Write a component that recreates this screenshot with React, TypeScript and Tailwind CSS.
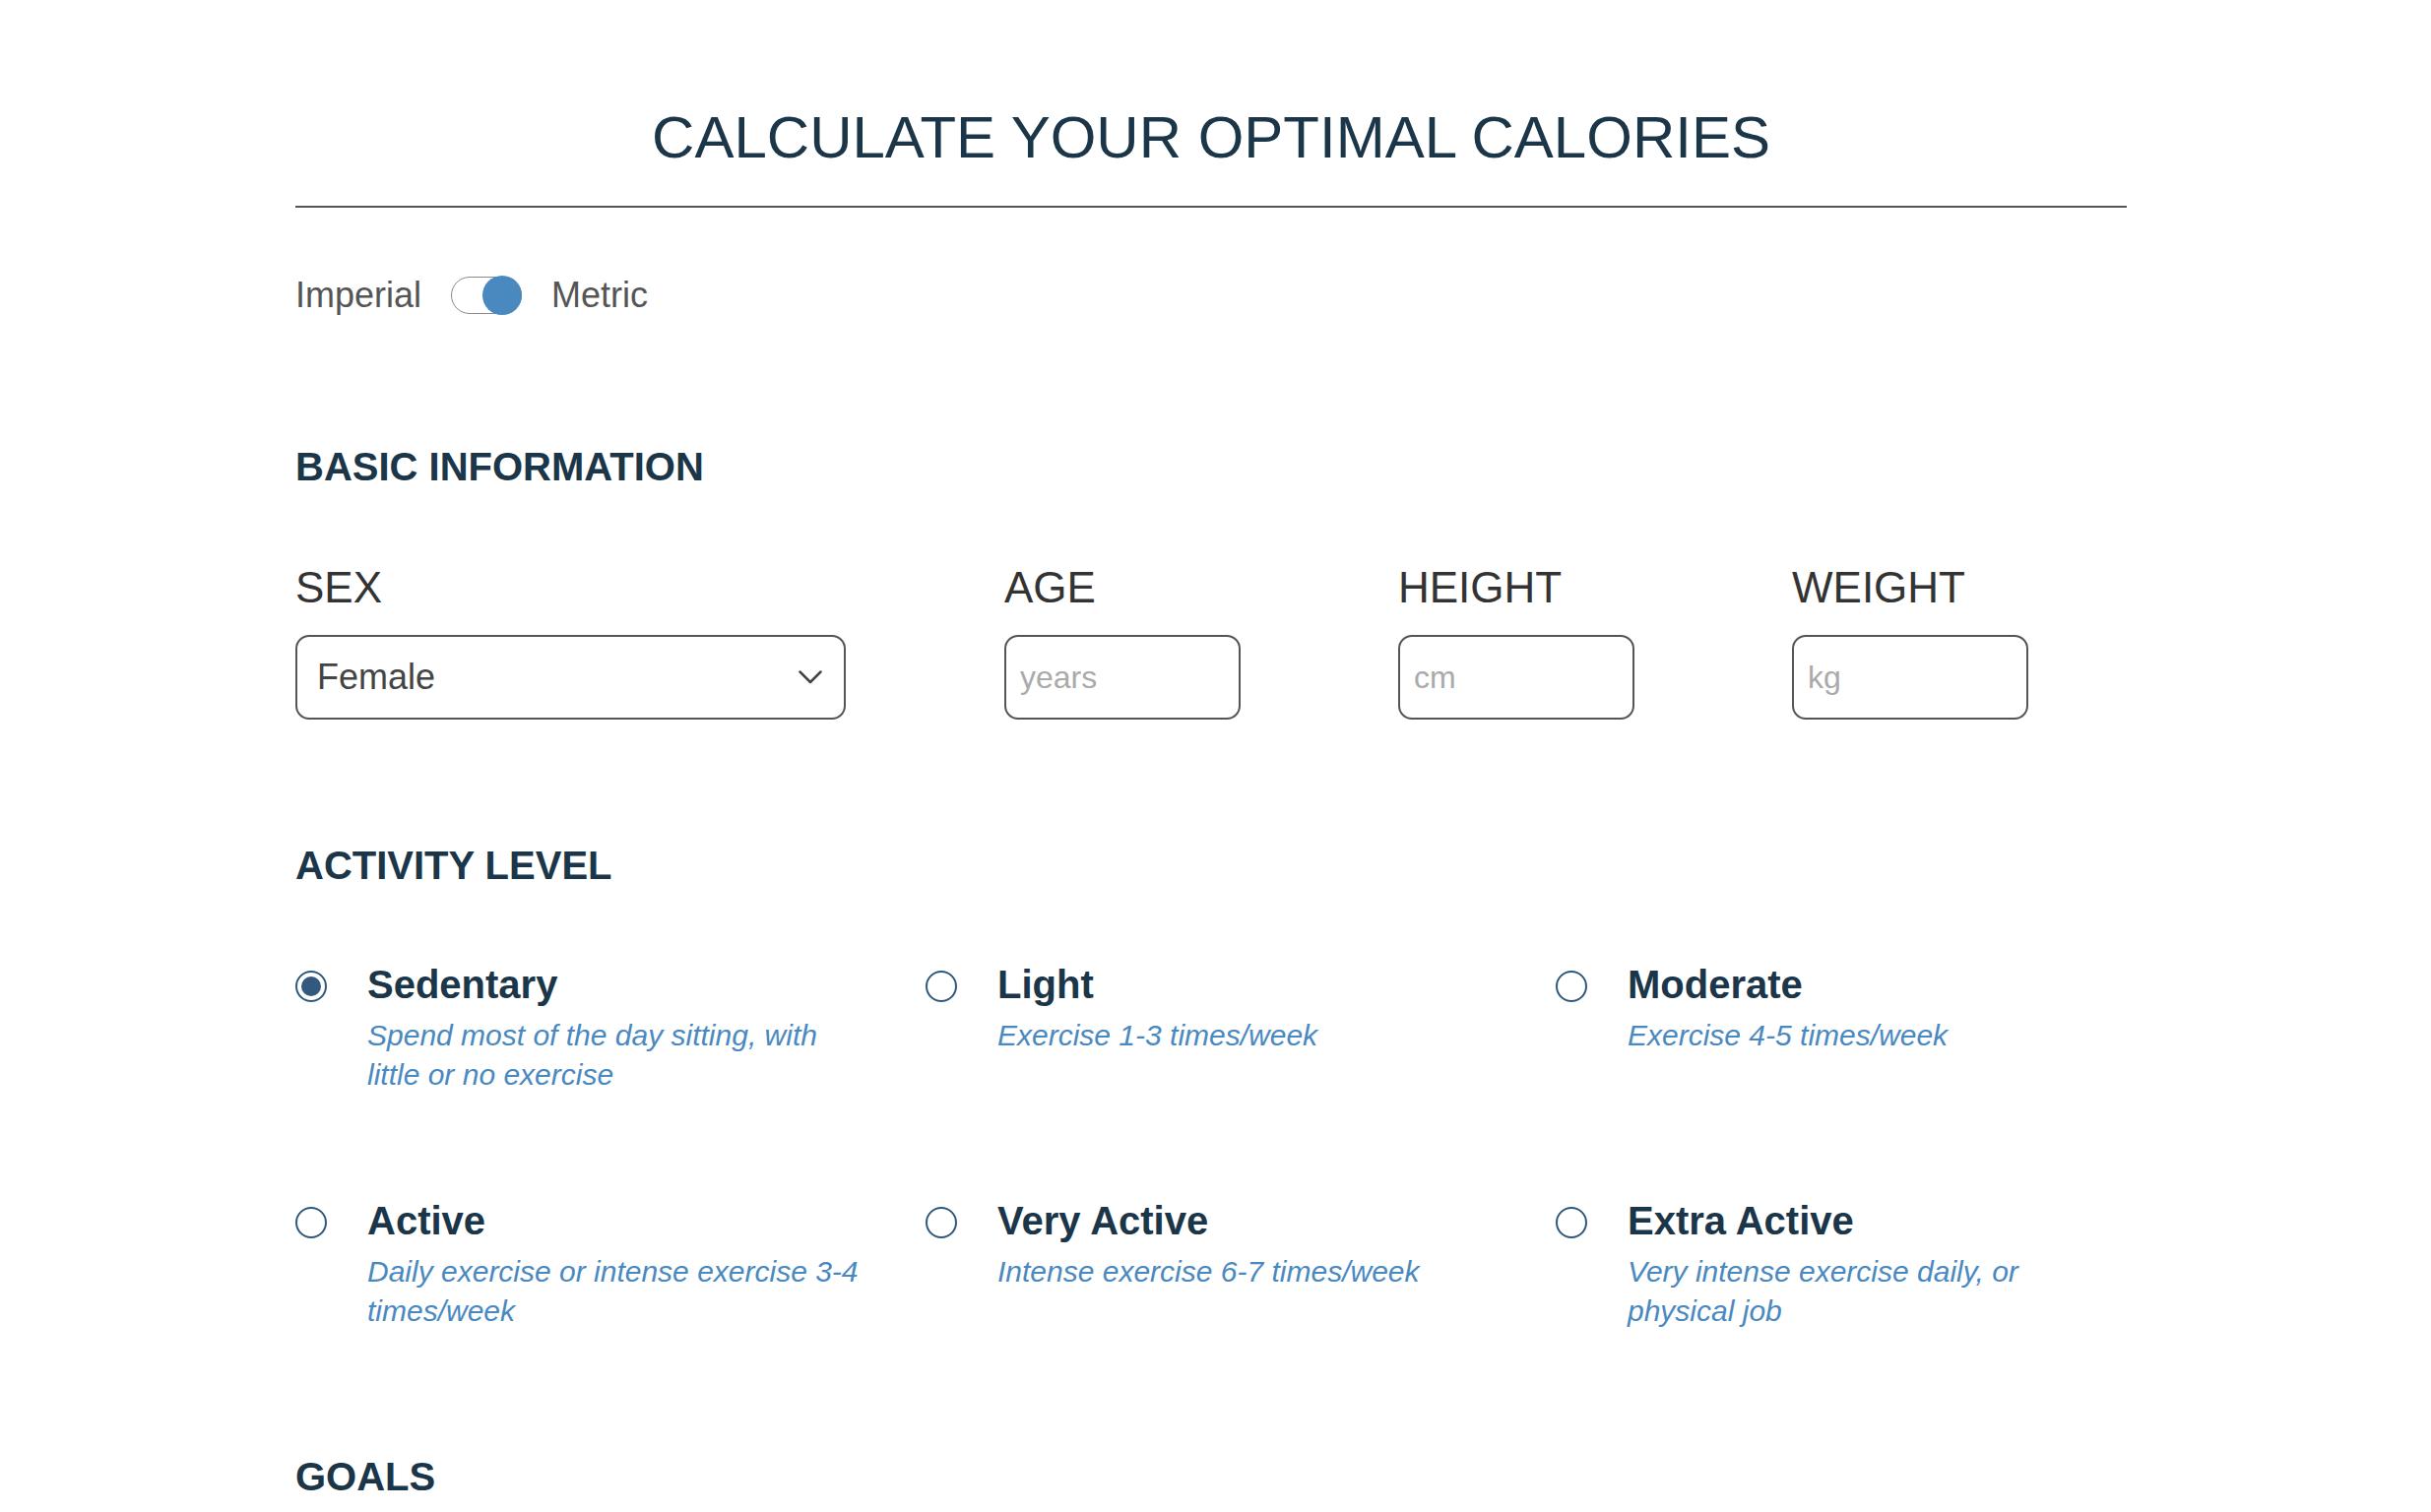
import React from "react";

const activities = [
  { title: "Sedentary", desc: "Spend most of the day sitting, with little or no exercise", checked: true },
  { title: "Light", desc: "Exercise 1-3 times/week", checked: false },
  { title: "Moderate", desc: "Exercise 4-5 times/week", checked: false },
  { title: "Active", desc: "Daily exercise or intense exercise 3-4 times/week", checked: false },
  { title: "Very Active", desc: "Intense exercise 6-7 times/week", checked: false },
  { title: "Extra Active", desc: "Very intense exercise daily, or physical job", checked: false },
];

function Radio({ checked }: { checked: boolean }) {
  return (
    <div className="mt-[10px] flex h-[32px] w-[32px] shrink-0 items-center justify-center rounded-full border-2 border-[#2f587d] bg-white">
      {checked && <div className="h-[20px] w-[20px] rounded-full bg-[#34597e]" />}
    </div>
  );
}

export default function App() {
  return (
    <div className="min-h-screen bg-white font-['Liberation_Sans',Arial,sans-serif]">
      <div className="ml-[300px] w-[1860px] pt-[104px] pb-[40px]">
        <h1 className="text-center text-[60px] leading-[72px] font-normal text-[#1b3549]">
          CALCULATE YOUR OPTIMAL CALORIES
        </h1>
        <div className="mt-[33px] h-[2px] bg-[#555555]" />

        <div className="mt-[69px] flex h-[40px] items-center gap-[30px] text-[36px] text-[#555555]">
          <span>Imperial</span>
          <div className="relative h-[40px] w-[72px]">
            <div className="absolute inset-x-0 top-[1px] bottom-[1px] rounded-full border-[1.5px] border-[#8a8a8a] bg-white" />
            <div className="absolute right-0 top-0 h-[40px] w-[40px] rounded-full bg-[#4a89c0]" />
          </div>
          <span>Metric</span>
        </div>

        <h2 className="mt-[130px] text-[40px] font-bold leading-[48px] text-[#1b3549]">BASIC INFORMATION</h2>

        <div className="mt-[73px] grid grid-cols-[720px_400px_400px_340px]">
          <div>
            <div className="text-[44px] leading-[52px] text-[#333333]">SEX</div>
            <div className="mt-[22px] flex h-[86px] w-[559px] items-center justify-between rounded-[14px] border-2 border-[#555555] pl-[20px] pr-[22px] text-[36px] text-[#444444]">
              <span>Female</span>
              <svg width="24" height="14" viewBox="0 0 24 14" fill="none">
                <path d="M1.5 1.5 L12 12 L22.5 1.5" stroke="#444444" strokeWidth="2.5" strokeLinecap="round" strokeLinejoin="round" />
              </svg>
            </div>
          </div>
          {[
            { label: "AGE", ph: "years" },
            { label: "HEIGHT", ph: "cm" },
            { label: "WEIGHT", ph: "kg" },
          ].map((f) => (
            <div key={f.label}>
              <div className="text-[44px] leading-[52px] text-[#333333]">{f.label}</div>
              <input
                placeholder={f.ph}
                className="mt-[22px] block h-[86px] w-[240px] rounded-[14px] border-2 border-[#555555] bg-white px-[14px] text-[32px] text-[#333333] outline-none placeholder:text-[#aaaaaa]"
              />
            </div>
          ))}
        </div>

        <h2 className="mt-[124px] text-[40px] font-bold leading-[48px] text-[#1b3549]">ACTIVITY LEVEL</h2>

        <div className="mt-[73px] grid grid-cols-3 gap-x-[60px] gap-y-[104px]">
          {activities.map((a) => (
            <div key={a.title} className="flex items-start gap-[41px]">
              <Radio checked={a.checked} />
              <div className="min-w-0 flex-1">
                <div className="text-[40px] font-bold leading-[48px] text-[#1b3549]">{a.title}</div>
                <div className="mt-[8px] text-[30px] italic leading-[40px] text-[#4a89c0]">{a.desc}</div>
              </div>
            </div>
          ))}
        </div>

        <h2 className="mt-[124px] text-[40px] font-bold leading-[48px] text-[#1b3549]">GOALS</h2>
      </div>
    </div>
  );
}
